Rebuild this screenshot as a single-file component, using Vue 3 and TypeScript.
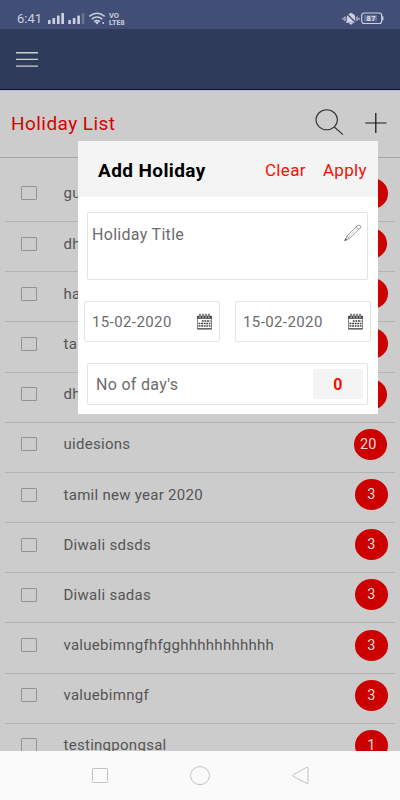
<script setup lang="ts">
interface Holiday {
  title: string
  days: string
}

const holidays: Holiday[] = [
  { title: 'gu', days: '3' },
  { title: 'dh', days: '10' },
  { title: 'ha', days: '3' },
  { title: 'ta', days: '3' },
  { title: 'dh', days: '10' },
  { title: 'uidesions', days: '20' },
  { title: 'tamil new year 2020', days: '3' },
  { title: 'Diwali sdsds', days: '3' },
  { title: 'Diwali sadas', days: '3' },
  { title: 'valuebimngfhfgghhhhhhhhhhh', days: '3' },
  { title: 'valuebimngf', days: '3' },
  { title: 'testingpongsal', days: '1' },
]

const dates: string[] = ['15-02-2020', '15-02-2020']
</script>

<template>
  <div class="screen">
    <header class="status">
      <span class="clock">6:41</span>
      <svg class="signals" width="78" height="16" viewBox="0 0 78 16">
        <g fill="#ccd0e0">
          <rect x="0" y="9" width="2.6" height="4" rx=".6" />
          <rect x="4.5" y="7" width="2.6" height="6" rx=".6" />
          <rect x="9" y="4.5" width="2.6" height="8.5" rx=".6" />
          <rect x="13.3" y="2" width="2.7" height="11" rx=".6" />
          <rect x="20.3" y="9" width="2.6" height="4" rx=".6" />
          <rect x="24.8" y="7" width="2.6" height="6" rx=".6" />
          <rect x="29.3" y="4.5" width="2.6" height="8.5" rx=".6" />
        </g>
        <rect x="33.8" y="2" width="2.5" height="11" rx=".6" fill="#6b7594" />
        <g fill="none" stroke="#ccd0e0" stroke-width="1.5">
          <path d="M41.3 5.4Q49 -.8 56.7 5.400" />
          <path d="M43.7 8.2Q49 3.800 54.300 8.200" />
          <path d="M46 10.600Q49 8.200 52 10.600" />
        </g>
        <path d="M47 11.200Q49 9.800 51 11.200L49 13.500Z" fill="#ccd0e0" />
        <circle cx="55.2" cy="12" r="1" fill="#ccd0e0" />
        <text class="lte" x="61" y="7.2" textLength="10" lengthAdjust="spacingAndGlyphs">VO</text>
        <text class="lte" x="61" y="13.6" textLength="15.5" lengthAdjust="spacingAndGlyphs">LTE8</text>
      </svg>
      <svg class="bell" width="18" height="14" viewBox="0 0 18 14">
        <path d="M3.600 10.800L4.800 9V5.500Q5 2.300 8 1.600L9 .4L10 1.600Q13 2.300 13.200 5.500V9L14.400 10.800ZM7 11H11Q9 14 7 11Z" fill="#ccd0e0" />
        <path d="M3 4.500V9M1 5.800V7.800M15 4.500V9M17 5.800V7.800" stroke="#ccd0e0" stroke-width="1.2" />
        <path d="M4.600 1.500L14.600 11.500" stroke="#404d75" stroke-width="1.3" />
      </svg>
      <svg class="battery" width="23" height="13" viewBox="0 0 23 13">
        <rect x=".7" y="1" width="20" height="10.5" rx="2.5" fill="#404d75" stroke="#ccd0e0" stroke-width="1.2" />
        <rect x="3" y="3" width="13" height="6.5" fill="#65709a" />
        <rect x="21" y="4.3" width="1.4" height="4" fill="#ccd0e0" />
        <text x="5.6" y="9.2" class="charge">87</text>
      </svg>
    </header>

    <nav class="appbar">
      <svg width="22" height="18" viewBox="0 0 22 18">
        <path d="M0 1.700H22M0 8.400H22M0 15.100H22" stroke="#cfd0cc" stroke-width="1.4" />
      </svg>
    </nav>

    <section class="toolbar">
      <h1>Holiday List</h1>
      <svg class="search" width="30" height="28" viewBox="0 0 30 28">
        <ellipse cx="11.7" cy="10.8" rx="10.700" ry="10" />
        <path d="M19.3 18L28 25.700" />
      </svg>
      <svg class="plus" width="22" height="22" viewBox="0 0 22 22">
        <path d="M.3 11H21.5" stroke="#4a4a4a" stroke-width="1.4" />
        <path d="M10.8 1V21" stroke="#111" stroke-width="1.2" />
      </svg>
    </section>

    <main class="list">
      <div v-for="(holiday, index) in holidays" :key="index" class="row">
        <span class="box"></span>
        <span class="title">{{ holiday.title }}</span>
        <span class="badge" :class="{ wide: holiday.days.length > 1 }">{{ holiday.days }}</span>
      </div>
    </main>

    <footer class="navbar">
      <svg width="16" height="20" viewBox="0 0 16 20">
        <rect x=".5" y="2.5" width="15" height="14" rx="1" />
      </svg>
      <svg width="20" height="20" viewBox="0 0 20 20">
        <ellipse cx="10" cy="9.6" rx="9.5" ry="9" />
      </svg>
      <svg width="17" height="20" viewBox="0 0 17 20">
        <path d="M1 8.900L15 1.200Q16 .8 16 1.800V17.100Q16 18.100 15 17.600L1 10.200Q0 9.600 1 8.900Z" />
      </svg>
    </footer>

    <div class="dialog">
      <div class="dialog-head">
        <h2>Add Holiday</h2>
        <button class="clear">Clear</button>
        <button class="apply">Apply</button>
      </div>
      <div class="dialog-body">
        <div class="field name">
          <span>Holiday Title</span>
          <svg width="18" height="18" viewBox="0 0 18 18" fill="none" stroke="#777" stroke-width=".7">
            <path d="M1 16.500L2.800 12.200L13.300 1.700Q14.600 .6 16.200 1.600Q17.400 2.700 16.500 4L5.400 14.400ZM2.800 12.200L5.400 14.400M12 3L15 5.400" />
            <path d="M4.500 13L13.300 4.300" stroke-dasharray="1 1" />
            <path d="M.6 16.700L1.500 14.500L3 15.700Z" fill="#444" />
          </svg>
        </div>
        <div class="dates">
          <div v-for="(date, index) in dates" :key="index" class="field date">
            <span>{{ date }}</span>
            <svg width="15" height="17" viewBox="0 0 15 17">
              <path d="M.5 3H14.500V16H.5Z" fill="#fff" stroke="#777" stroke-width=".9" />
              <path d="M.3 3H14.700V5.800H.3Z" fill="#444" />
              <path d="M3 .5V4.500M6 .5V4.500M9 .5V4.500M12 .5V4.500" stroke="#fff" stroke-width="2" />
              <path d="M3 .7V4.300M6 .7V4.300M9 .7V4.300M12 .7V4.300" stroke="#333" stroke-width="1.2" />
              <path d="M4.800 8H13.500M1.500 10.500H13.500M1.500 13H13.500" stroke="#444" stroke-width="1.7" stroke-dasharray="1.9 .7" />
              <path d="M.3 15.800H14.700" stroke="#444" stroke-width="1" />
            </svg>
          </div>
        </div>
        <div class="field days">
          <span>No of day's</span>
          <strong>0</strong>
        </div>
      </div>
    </div>
  </div>
</template>

<style>
body {
  margin: 0;
}
</style>

<style scoped>
.screen {
  position: relative;
  display: flex;
  flex-direction: column;
  width: 400px;
  height: 800px;
  overflow: hidden;
  background: #ccc;
  font-family: Roboto, "Liberation Sans", sans-serif;
}
.status {
  display: flex;
  flex: none;
  box-sizing: border-box;
  height: 29px;
  padding: 11px 16px 0 17px;
  background: #414e76;
  color: #ccd0e0;
}
.clock {
  width: 31px;
  font-size: 13px;
  line-height: 16px;
}
.lte {
  font-size: 6.5px;
  font-weight: 700;
  fill: #ccd0e0;
}
.bell {
  margin: 1px 1px 0 auto;
}
.battery {
  margin-top: 1px;
}
.charge {
  font-size: 7.5px;
  font-weight: 700;
  letter-spacing: 0.4px;
  fill: #e4e6f0;
}
.appbar {
  display: flex;
  flex: none;
  box-sizing: border-box;
  height: 61px;
  padding: 22px 16px 0;
  border-bottom: 1px solid #090b40;
  background: #2f3b5b;
}
.toolbar {
  display: flex;
  flex: none;
  align-items: center;
  box-sizing: border-box;
  height: 68px;
  padding: 0 13px 2px 11px;
  border-top: 1px solid #bebebe;
  border-bottom: 1px solid #a3a3a3;
}
h1 {
  flex: 1;
  margin: 0;
  color: #d60000;
  font-size: 19px;
  font-weight: 400;
  letter-spacing: 0.45px;
}
.search {
  margin-right: 20px;
  fill: none;
  stroke: #333;
  stroke-width: 1.1;
}
.list {
  flex: 1;
  min-height: 0;
  padding: 13.8px 5px 0;
  overflow: hidden;
}
.row {
  display: flex;
  align-items: center;
  box-sizing: border-box;
  height: 50.2px;
  padding: 0 7px 6px 16px;
  border-bottom: 1px solid #b3b3b3;
}
.box {
  box-sizing: border-box;
  width: 16px;
  height: 14px;
  border: 1px solid #929292;
  border-radius: 1px;
}
.title {
  flex: 1;
  margin-left: 26.5px;
  color: #555;
  font-size: 15px;
  letter-spacing: 0.28px;
}
.badge {
  width: 33.5px;
  height: 31px;
  border-radius: 50%;
  background: #cd0000;
  color: #ddd;
  font-size: 14.5px;
  line-height: 32px;
  text-align: center;
}
.badge.wide {
  box-sizing: border-box;
  margin-right: 1px;
  padding-right: 4px;
}
.navbar {
  display: flex;
  flex: none;
  align-items: center;
  justify-content: space-between;
  box-sizing: border-box;
  height: 49px;
  padding: 0 91px 0 92px;
  background: #fafafa;
}
.navbar svg {
  fill: none;
  stroke: #c2c2c2;
  stroke-width: 1;
}
.dialog {
  position: absolute;
  top: 141px;
  left: 78px;
  width: 300px;
  height: 273px;
  background: #fff;
}
.dialog-head {
  display: flex;
  align-items: center;
  box-sizing: border-box;
  height: 56px;
  padding: 2px 11px 0 20px;
  background: #f4f4f4;
}
h2 {
  flex: 1;
  margin: 0;
  color: #000;
  font-size: 19px;
  font-weight: 700;
  letter-spacing: 0.4px;
}
button {
  padding: 0;
  border: 0;
  background: none;
  color: #f51000;
  font: 400 17px Roboto, "Liberation Sans", sans-serif;
  letter-spacing: 0.35px;
}
.clear {
  margin-right: 17px;
}
.dialog-body {
  padding: 15px 7px 0 6px;
}
.field {
  display: flex;
  box-sizing: border-box;
  border: 1px solid #e4e4e4;
  border-radius: 2px;
  color: #6c6c6c;
}
.name {
  height: 68px;
  margin: 0 3px 21px;
  padding: 11px 5px 0 4px;
  justify-content: space-between;
  font-size: 16px;
  line-height: 21px;
  letter-spacing: 0.3px;
}
.dates {
  display: grid;
  grid-template-columns: 136px 136px;
  justify-content: space-between;
  margin-bottom: 21px;
}
.date {
  align-items: center;
  justify-content: space-between;
  height: 41px;
  padding: 0 7px;
  font-size: 15px;
  letter-spacing: 0.4px;
}
.days {
  align-items: center;
  justify-content: space-between;
  height: 42px;
  margin: 0 3px;
  padding: 0 4px 0 8px;
  font-size: 16px;
  letter-spacing: 0.3px;
}
.days strong {
  width: 50px;
  height: 30px;
  background: #f4f4f4;
  color: #f51000;
  font-size: 16px;
  line-height: 31px;
  text-align: center;
}
</style>
